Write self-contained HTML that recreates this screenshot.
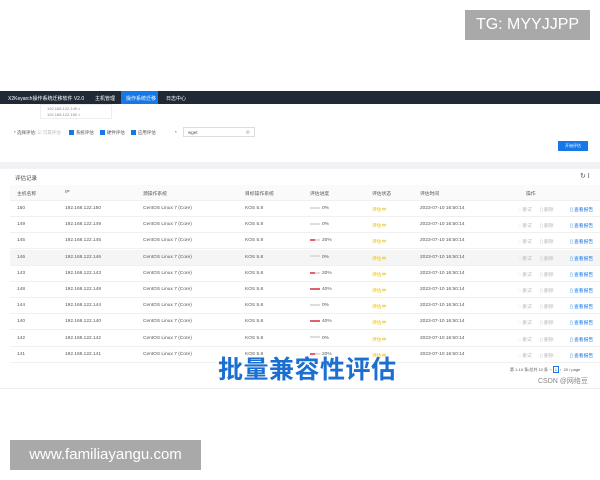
<!DOCTYPE html>
<html><head><meta charset="utf-8"><style>
*{margin:0;padding:0;box-sizing:border-box}
body{width:600px;height:480px;background:#fff;position:relative;overflow:hidden;font-family:"Liberation Sans","Noto Sans CJK SC",sans-serif;font-size:4.8px;color:#555}
.abs{position:absolute}
.nav{left:0;top:91px;width:600px;height:13px;background:#1f2a36;color:#fff;font-size:5px}
.nav span{position:absolute;top:4px}
.row{position:absolute;left:10px;width:590px;height:16px;border-bottom:1px solid #f0f0f0}
.row span{position:absolute;top:5px;white-space:nowrap}
.bar{display:inline-block;width:10px;height:2px;background:#ddd;vertical-align:middle;margin-right:2px}
.cb{display:inline-block;width:5px;height:5px;background:#1677e6;vertical-align:middle;margin-left:8px;margin-right:2px}
</style></head><body>
<div class="abs" style="left:465px;top:10px;width:125px;height:30px;background:#a9a9a9;color:#fff;font-size:16px;line-height:30px;text-align:center">TG: MYYJJPP</div>
<div class="abs nav">
<span style="left:8px">X2Keyarch操作系统迁移软件 V2.0</span>
<span style="left:95px">主机管理</span>
<div class="abs" style="left:121px;top:0;width:37px;height:13px;background:#1677e6"></div>
<span style="left:126px">操作系统迁移</span>
<span style="left:166px">日志中心</span>
</div>
<div class="abs" style="left:40px;top:104px;width:72px;height:15px;border:1px solid #eee;font-size:4px;color:#888;padding:1px 6px;line-height:6px">192.168.122.149 ×<br>192.168.122.150 ×</div>
<div class="abs" style="left:14px;top:130px;font-size:4.5px;color:#555">* 选择评估: <span style="color:#bbb">☑ 可靠评估</span><i class="cb"></i>系统评估<i class="cb" style="margin-left:6px"></i>硬件评估<i class="cb" style="margin-left:6px"></i>应用评估</div>
<div class="abs" style="left:175px;top:130px;font-size:4.5px">*</div>
<div class="abs" style="left:183px;top:127px;width:72px;height:10px;border:1px solid #ddd;font-size:4.5px;padding:2px 4px">wget<span style="float:right;color:#999">⊗</span></div>
<div class="abs" style="left:558px;top:141px;width:30px;height:10px;background:#1677e6;color:#fff;font-size:4px;text-align:center;line-height:10px">开始评估</div>
<div class="abs" style="left:0;top:162px;width:600px;height:7px;background:#f0f2f5"></div>
<div class="abs" style="left:15px;top:174px;font-size:5.5px;color:#444">评估记录</div>
<div class="abs" style="left:580px;top:172px;font-size:7px;color:#555">↻ I</div>
<div class="row" style="top:185px;background:#fafafa"><span style="left:7px">主机名称</span><span style="left:55px">IP</span><span style="left:133px">源操作系统</span><span style="left:235px">目标操作系统</span><span style="left:300px">评估进度</span><span style="left:362px">评估状态</span><span style="left:410px">评估时间</span><span style="left:516px">操作</span></div>
<div id="rows"></div>
<script>
var d=[["150",0],["149",0],["145",20],["146",0],["143",20],["148",40],["144",0],["140",40],["142",0],["141",20]];
var h="";
d.forEach(function(r,i){var t=201+i*16.2;var c=r[1]?'linear-gradient(90deg,#e06070 '+(r[1]*2.5)+'%,#ddd 0)':'#ddd';
h+='<div class="row" style="top:'+t+'px;'+(i==3?'background:#f5f5f5':'')+'"><span style="left:7px">'+r[0]+'</span><span style="left:55px">192.168.122.'+r[0]+'</span><span style="left:133px">CentOS Linux 7 (Core)</span><span style="left:235px">KOS 5.8</span><span style="left:300px"><i class="bar" style="background:'+c+'"></i>'+r[1]+'%</span><span style="left:362px;color:#e6c200">评估中</span><span style="left:410px">2023-07-10 16:50:14</span><span style="left:508px;color:#bbb">◌ 重试</span><span style="left:530px;color:#bbb">▯ 删除</span><span style="left:560px;color:#1677e6">▯ 查看报告</span></div>';});
document.getElementById('rows').innerHTML=h;
</script>
<div class="abs" style="left:510px;top:367px;font-size:4px;color:#555">第 1-10 条/总共 10 条 &nbsp;‹ <span style="border:1px solid #1677e6;padding:0 1px;color:#1677e6">1</span> › &nbsp;20 / page</div>
<div class="abs" style="left:538px;top:376px;font-size:7px;color:#888">CSDN @网络豆</div>
<div class="abs" style="left:218px;top:350px;font-size:25px;font-weight:bold;color:#1a6fd1;font-family:'Noto Sans CJK SC',sans-serif;letter-spacing:0.5px">批量兼容性评估</div>
<div class="abs" style="left:0;top:388px;width:600px;height:1px;background:#eee"></div>
<div class="abs" style="left:10px;top:440px;width:191px;height:30px;background:#a9a9a9;color:#fff;font-size:15px;line-height:30px;text-align:center">www.familiayangu.com</div>
</body></html>
